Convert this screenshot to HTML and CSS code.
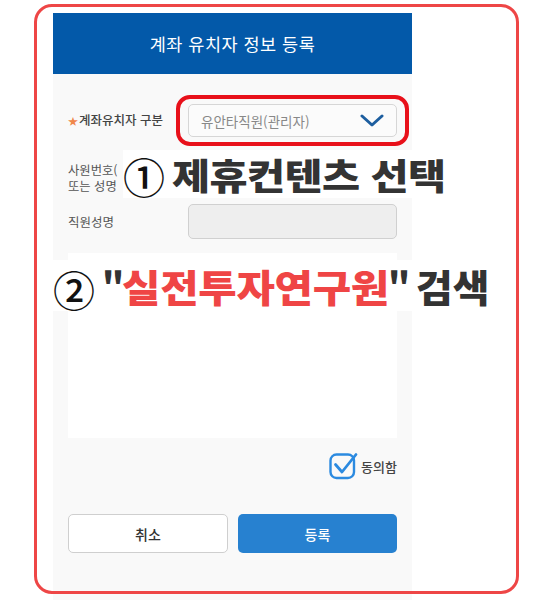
FILE: index.html
```html
<!DOCTYPE html>
<html lang="ko">
<head>
<meta charset="utf-8">
<link rel="stylesheet" href="styles.css">
</head>
<body>
<div class="panel">
  <div class="panel-head">계좌 유치자 정보 등록</div>
  <div class="form">
    <div class="row row-type">
      <div class="label"><span class="star">★</span>계좌유치자 구분</div>
      <div class="select">
        <span>유안타직원(관리자)</span>
        <svg class="chev" width="24" height="13" viewBox="0 0 24 13"><polyline points="2,2 12,11 22,2" fill="none" stroke="#1d5e9f" stroke-width="3" stroke-linecap="round" stroke-linejoin="round"/></svg>
      </div>
    </div>
    <div class="row row-emp">
      <div class="label"><span class="label-small">사원번호(<br>또는 성명</span></div>
      <div class="input"></div>
    </div>
    <div class="row row-name">
      <div class="label">직원성명</div>
      <div class="input disabled"></div>
    </div>
    <div class="textarea"></div>
    <div class="agree">
      <svg width="30" height="28" viewBox="0 0 30 28"><rect x="1.5" y="2.5" width="23.5" height="23.5" rx="6" fill="none" stroke="#2b8ae0" stroke-width="2.4"/><path d="M6.5 12.5 L13 20 L27 2.5" fill="none" stroke="#2b8ae0" stroke-width="2.8" stroke-linecap="round" stroke-linejoin="round"/></svg>
      <span>동의함</span>
    </div>
    <div class="buttons">
      <div class="btn btn-cancel">취소</div>
      <div class="btn btn-ok">등록</div>
    </div>
  </div>
</div>

<div class="frame"></div>
<div class="highlight"></div>
<div class="note note1"><span class="circ">①</span><span class="note1-text">제휴컨텐츠 선택</span></div>
<div class="note note2"><span class="circ">②</span><span class="q q-open">"</span><span class="red"><span class="stretch">실전투자연구원</span></span><span class="q q-close">"</span><span class="dark"><span class="stretch">검색</span></span></div>
</body>
</html>
```

FILE: styles.css
```css
html, body {
  margin: 0;
  padding: 0;
  background: #ffffff;
  font-family: "Noto Sans CJK KR", "Noto Sans", sans-serif;
}
body {
  width: 555px;
  height: 600px;
  overflow: hidden;
  position: relative;
}
.panel {
  margin-left: 53px;
  margin-top: 13px;
  width: 359px;
  height: 587px;
  background: #f9f9f9;
}
.panel-head {
  height: 61px;
  background: #0359a9;
  color: #ffffff;
  font-size: 17.5px;
  display: flex;
  align-items: center;
  justify-content: center;
  letter-spacing: 0.5px;
}
.form {
  padding: 30px 15px 0 15px;
}
.row {
  display: flex;
  align-items: center;
}
.label {
  width: 120px;
  flex: none;
  font-size: 12.5px;
  color: #555555;
  line-height: 16px;
  white-space: nowrap;
}
.label-small {
  font-size: 12.3px;
}
.star {
  color: #f0874a;
  font-size: 10px;
  margin-right: 1px;
}
.row-type .label { font-weight: 500; color: #444; }
.select {
  width: 209px;
  height: 33px;
  box-sizing: border-box;
  border: 1px solid #d6d6d6;
  border-radius: 5px;
  background: #fbfbfb;
  display: flex;
  align-items: center;
  justify-content: space-between;
  padding: 0 12px 0 12px;
  font-size: 13.5px;
  color: #888888;
}
.row-emp {
  margin-top: 24px;
  height: 34px;
}
.input {
  width: 209px;
  height: 35px;
  box-sizing: border-box;
  border: 1px solid #d0d0d0;
  border-radius: 5px;
  background: #ffffff;
}
.input.disabled {
  background: #eeeeee;
}
.row-name {
  margin-top: 9px;
}
.textarea {
  margin-top: 14px;
  width: 329px;
  height: 185px;
  background: #ffffff;
}
.agree {
  margin-top: 14px;
  width: 329px;
  display: flex;
  justify-content: flex-end;
  align-items: center;
  font-size: 13px;
  color: #444;
  font-weight: 500;
}
.agree svg { margin-right: 1px; }
.agree span { margin-left: 1px; }
.buttons {
  margin-top: 34px;
  display: flex;
  gap: 10px;
  width: 329px;
}
.btn {
  height: 39px;
  box-sizing: border-box;
  border-radius: 5px;
  display: flex;
  align-items: center;
  justify-content: center;
  font-size: 14px;
  font-weight: 500;
}
.btn-cancel {
  width: 160px;
  background: #ffffff;
  border: 1px solid #cfcfcf;
  color: #333;
}
.btn-ok {
  width: 159px;
  background: #2781d0;
  color: #ffffff;
}

/* overlays */
.frame {
  position: absolute;
  left: 34px;
  top: 4px;
  width: 485px;
  height: 590px;
  box-sizing: border-box;
  border: 3.5px solid #ee4646;
  border-radius: 18px;
}
.highlight {
  position: absolute;
  left: 176px;
  top: 95px;
  width: 233px;
  height: 51px;
  box-sizing: border-box;
  border: 4px solid #e8101a;
  border-radius: 14px;
}
.note {
  position: absolute;
  background: #ffffff;
  display: flex;
  align-items: center;
  white-space: nowrap;
}
.note1 {
  left: 123px;
  top: 150px;
  width: 334px;
  height: 48px;
}
.circ {
  display: inline-block;
  width: 42px;
  flex: none;
  text-align: center;
  font-size: 42px;
  font-weight: 500;
  color: #111;
  line-height: 1;
}
.note1 .circ { margin-top: 4px; }
.note1-text {
  display: inline-block;
  font-size: 36px;
  font-weight: 900;
  color: #333333;
  margin-left: 7px;
  transform: scaleX(1.15);
  transform-origin: left center;
  letter-spacing: -0.5px;
}
.note2 {
  left: 45px;
  top: 260px;
  width: 455px;
  height: 51px;
}
.note2 .circ {
  margin-left: 8px;
  margin-top: 7px;
}
.q {
  display: inline-block;
  width: 16px;
  flex: none;
  text-align: center;
  font-size: 35px;
  font-weight: 900;
  color: #333;
  line-height: 1.3;
}
.q-open { margin-left: 7px; }
.q-close { margin-left: 3px; }
.red, .dark {
  display: inline-block;
  flex: none;
  font-size: 38px;
  font-weight: 900;
  line-height: 1.3;
}
.red {
  width: 263px;
  color: #ef4545;
  margin-left: 4px;
}
.dark {
  width: 74px;
  color: #333;
  margin-left: 12px;
}
.stretch {
  display: inline-block;
  transform-origin: left center;
}
.red .stretch { transform: scaleX(1.1); letter-spacing: -0.3px; }
.dark .stretch { transform: scaleX(1.05); }
```
